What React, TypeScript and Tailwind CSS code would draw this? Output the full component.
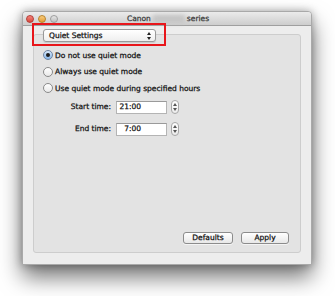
import React from "react";

const font = { fontFamily: '"DejaVu Sans", "Liberation Sans", sans-serif' };

function Radio({ checked, label }: { checked?: boolean; label: string }) {
  return (
    <div className="flex h-[16.5px] items-center">
      {checked ? (
        <div className="flex h-[10px] w-[10px] items-center justify-center rounded-full border border-[#6e84a3] bg-gradient-to-b from-[#d9e9fb] to-[#86b5e8]">
          <div className="h-[4px] w-[4px] rounded-full bg-[#1b1b1b]" />
        </div>
      ) : (
        <div className="h-[10px] w-[10px] rounded-full border border-[#8a8a8a] bg-gradient-to-b from-[#ffffff] to-[#e9e9e9]" />
      )}
      <span className="ml-[2px] text-[7.5px] leading-none text-[#111]">{label}</span>
    </div>
  );
}

function Stepper() {
  return (
    <div className="flex h-[14px] w-[8px] flex-col items-center justify-center gap-[2px] rounded-full border border-[#a8a8a8] bg-gradient-to-b from-white to-[#ececec]">
      <svg width="4" height="3" viewBox="0 0 4 3">
        <path d="M0 3 L2 0 L4 3 Z" fill="#555" />
      </svg>
      <svg width="4" height="3" viewBox="0 0 4 3">
        <path d="M0 0 L2 3 L4 0 Z" fill="#555" />
      </svg>
    </div>
  );
}

function TimeRow({ label, value }: { label: string; value: string }) {
  return (
    <div className="flex h-[13px] items-center">
      <div className="ml-[26px] w-[51px] text-right text-[7.5px] leading-none text-[#111]">{label}</div>
      <div className="ml-[5px] flex h-[13px] w-[51px] items-center border border-[#b4b4b4] border-t-[#9a9a9a] bg-white">
        <span className="w-[24px] text-right text-[7.5px] leading-none text-[#111]">{value}</span>
      </div>
      <div className="ml-[4px]">
        <Stepper />
      </div>
    </div>
  );
}

function Button({ label, w }: { label: string; w: string }) {
  return (
    <div
      className={`flex h-[12px] ${w} items-center justify-center rounded-[3px] border border-[#8c8c8c] bg-gradient-to-b from-white to-[#e8e8e8] text-[7.5px] leading-none text-[#111] shadow-[0_1px_0_rgba(255,255,255,0.6)]`}
    >
      {label}
    </div>
  );
}

export default function App() {
  return (
    <div
      className="relative h-[296px] w-[335px] overflow-hidden bg-white [-webkit-text-stroke-width:0.25px]"
      style={font}
    >
      <div className="ml-[22px] pt-[11px]">
        <div className="flex h-[254px] w-[290px] flex-col overflow-hidden rounded-t-[4px] border border-[#a9a9a9] bg-[#ededed] shadow-[0_12px_22px_rgba(0,0,0,0.55),0_0_9px_rgba(0,0,0,0.3)]">
          {/* title bar */}
          <div className="relative flex h-[14px] shrink-0 items-center border-b border-[#9f9f9f] bg-gradient-to-b from-[#ebebeb] to-[#cdcdcd]">
            <div className="ml-[3px] flex items-center gap-[4px]">
              <div className="h-[8px] w-[8px] rounded-full border border-[#b33d36] bg-gradient-to-b from-[#f3847c] to-[#d8453b]" />
              <div className="h-[8px] w-[8px] rounded-full border border-[#b7822b] bg-gradient-to-b from-[#f8cd7e] to-[#e39b2d]" />
              <div className="h-[8px] w-[8px] rounded-full border border-[#9c9c9c] bg-gradient-to-b from-[#e6e6e6] to-[#bdbdbd]" />
            </div>
            <div className="absolute inset-0 flex items-center justify-center pl-[2px] text-[7.5px] leading-none text-[#3a3a3a]">
              <span>Canon</span>
              <span className="mx-[2px] h-[8px] w-[32px] bg-[#c4c4c4] blur-[2px]" />
              <span>series</span>
            </div>
          </div>
          {/* body */}
          <div className="flex flex-1 flex-col px-[10px] pb-[11px] pt-[3px]">
            <div className="relative z-10 ml-[10px] flex h-[13px] w-[113px] items-center justify-between rounded-[3px] border border-[#999] bg-gradient-to-b from-white to-[#efefef] pl-[5px] pr-[4px] shadow-[0_1px_1px_rgba(0,0,0,0.12)]">
              <span className="text-[7.5px] leading-none text-[#111]">Quiet Settings</span>
              <svg width="4" height="8" viewBox="0 0 4 8">
                <path d="M0 3 L2 0 L4 3 Z" fill="#222" />
                <path d="M0 5 L2 8 L4 5 Z" fill="#222" />
              </svg>
            </div>
            <div className="-mt-[8px] flex flex-1 flex-col rounded-[3px] border border-[#cdcdcd] bg-[#e3e3e3] pt-[12px]">
              <div className="ml-[9px] flex flex-col">
                <Radio checked label="Do not use quiet mode" />
                <Radio label="Always use quiet mode" />
                <Radio label="Use quiet mode during specified hours" />
              </div>
              <div className="mt-[4px]">
                <TimeRow label="Start time:" value="21:00" />
              </div>
              <div className="mt-[9px]">
                <TimeRow label="End time:" value="7:00" />
              </div>
              <div className="mt-auto mb-[8px] mr-[11px] flex justify-end gap-[8px]">
                <Button label="Defaults" w="w-[50px]" />
                <Button label="Apply" w="w-[48px]" />
              </div>
            </div>
          </div>
        </div>
      </div>
      {/* red annotation box */}
      <div className="absolute left-[32px] top-[23px] h-[23px] w-[134px] border-2 border-[#e8161b]" />
    </div>
  );
}
